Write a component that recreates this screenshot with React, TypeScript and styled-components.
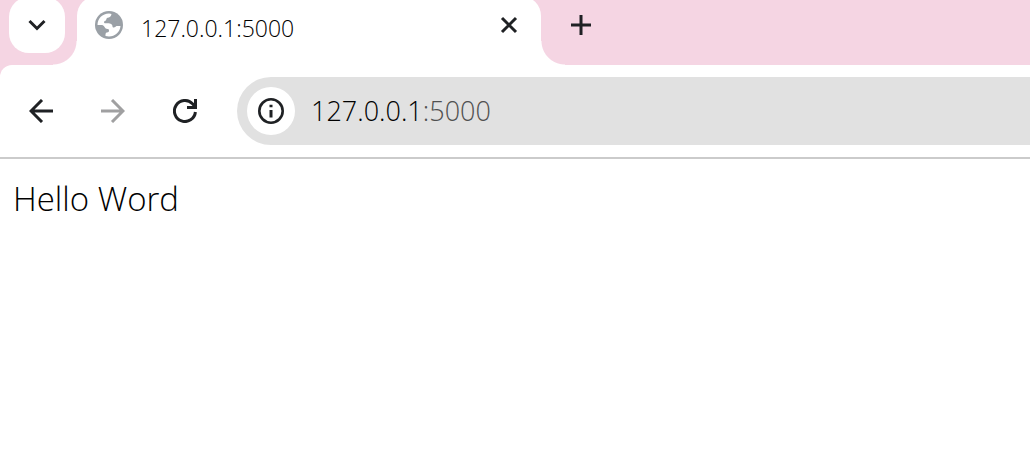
import React from "react";
import styled, { createGlobalStyle } from "styled-components";

const Global = createGlobalStyle`
  * { box-sizing: border-box; }
  body { margin: 0; background: #fff; overflow-x: hidden; }
  body, button, input { font-family: "Open Sans", "Noto Sans", sans-serif; }
`;

const Browser = styled.div`
  min-height: 100vh;
  background: #fff;
  overflow: hidden;
`;

const TabStrip = styled.header`
  display: flex;
  height: 65px;
  background: #f5d5e3;
`;

const IconButton = styled.button<{ $size: number }>`
  display: flex;
  flex: none;
  align-items: center;
  justify-content: center;
  width: ${(p) => p.$size}px;
  height: ${(p) => p.$size}px;
  padding: 0;
  border: 0;
  border-radius: 50%;
  background: transparent;
  color: #1f2124;
  svg { display: block; flex: none; }
  &:disabled { color: #a0a0a1; }
`;

const TabSearch = styled(IconButton)`
  margin: -3px 12px 0 9px;
  border-radius: 20px;
  background: #fff;
`;

const Tab = styled.div`
  position: relative;
  display: flex;
  align-items: center;
  flex: 0 1 464px;
  min-width: 0;
  height: 69px;
  margin-top: -4px;
  padding: 0 16px 11px;
  border-radius: 20px 20px 0 0;
  background: #fff;
  &::before, &::after {
    content: "";
    position: absolute;
    bottom: 0;
    width: 24px;
    height: 24px;
  }
  &::before {
    right: 100%;
    background: radial-gradient(circle at 0 0, transparent 23px, #fff 24px);
  }
  &::after {
    left: 100%;
    background: radial-gradient(circle at 100% 0, transparent 23px, #fff 24px);
  }
`;

const TabTitle = styled.span`
  flex: 1;
  margin-left: 16px;
  padding-top: 6px;
  font-size: 23px;
  font-weight: 300;
  line-height: 32px;
  color: #000;
`;

const NewTab = styled(IconButton)`
  margin: 5px 0 0 20px;
`;

const ToolbarWrap = styled.div`
  background: #f5d5e3;
`;

const Toolbar = styled.nav`
  display: flex;
  align-items: center;
  height: 94px;
  padding: 0 0 0 17px;
  border-bottom: 2px solid #cbcbcb;
  border-top-left-radius: 12px;
  background: #fff;
`;

const NavButtons = styled.div`
  display: flex;
  gap: 24px;
  margin-right: 28px;
`;

const AddressBar = styled.div`
  display: flex;
  align-items: center;
  flex: 1;
  height: 68px;
  padding-left: 10px;
  border-radius: 34px 0 0 34px;
  background: #e1e1e1;
`;

const SiteInfo = styled(IconButton)`
  background: #fff;
`;

const Url = styled.div`
  margin-left: 16px;
  font-size: 27px;
  font-weight: 300;
  line-height: 36px;
  color: #000;
`;

const Port = styled.span`
  color: #505050;
`;

const Page = styled.main`
  padding: 16px 13px;
  font-size: 33px;
  font-weight: 300;
  line-height: 48px;
  color: #000;
`;

const stroke = { fill: "none", stroke: "currentColor", strokeWidth: 3 };

export default function App() {
  return (
    <Browser>
      <Global />
      <TabStrip>
        <TabSearch $size={56} aria-label="Search tabs">
          <svg width="20" height="20" viewBox="0 0 20 20" {...stroke}>
            <path d="M2.500 6l7.500 7.500L17.500 6" />
          </svg>
        </TabSearch>
        <Tab>
          <svg width="32" height="32" viewBox="0 0 32 32">
            <circle cx="16" cy="16" r="14" fill="#9aa0a6" />
            <path
              fill="#fff"
              d="M4.500 16C4.500 9.500 9.500 4.600 16 4.500C17 4.500 18 4.700 18.500 5C18.300 7.500 16.500 8.500 14.500 8.700C13.300 9 13.500 10.500 13 11.200C12.300 12 11 12 11 13.200C11 14.200 12 14.300 13.500 14.300C16.500 14.300 19.500 14.800 19.500 17.500C19.500 18.300 20 18.500 20.800 18.500C22 18.500 22.500 17.500 23.500 17L27.500 17C27 23 22 27.500 16 27.500L12.500 27C12.500 26 12.300 23.500 14 23.500C15.500 23.500 16 22.800 16 21.500C16 20.500 15.500 20 14.500 20C11.500 20 11.500 16 9 16Z"
            />
          </svg>
          <TabTitle>127.0.0.1:5000</TabTitle>
          <IconButton $size={32} aria-label="Close tab">
            <svg width="20" height="20" viewBox="0 0 20 20" {...stroke}>
              <path d="M3 3l14 14M17 3L3 17" />
            </svg>
          </IconButton>
        </Tab>
        <NewTab $size={40} aria-label="New tab">
          <svg width="20" height="20" viewBox="0 0 20 20" {...stroke}>
            <path d="M0 10h20M10 0v20" />
          </svg>
        </NewTab>
      </TabStrip>
      <ToolbarWrap>
        <Toolbar>
          <NavButtons>
            <IconButton $size={48} aria-label="Back">
              <svg width="24" height="24" viewBox="0 0 24 24" {...stroke}>
                <path d="M24 12H2M13 1L2 12l11 11" />
              </svg>
            </IconButton>
            <IconButton $size={48} aria-label="Forward" disabled>
              <svg width="24" height="24" viewBox="0 0 24 24" {...stroke}>
                <path d="M0 12h22M11 1l11 11-11 11" />
              </svg>
            </IconButton>
            <IconButton $size={48} aria-label="Reload">
              <svg width="24" height="24" viewBox="0 0 24 24" {...stroke}>
                <path d="M22.400 13A10.500 10.500 0 1 1 19.500 4.700L22 7.500M22.500 0v8.500H14" />
              </svg>
            </IconButton>
          </NavButtons>
          <AddressBar>
            <SiteInfo $size={48} aria-label="View site information">
              <svg width="26" height="26" viewBox="0 0 26 26">
                <circle cx="13" cy="13" r="11.7" fill="none" stroke="currentColor" strokeWidth="2.6" />
                <path d="M11.500 6.700h3v2.600h-3zM11.500 12h3v7.500h-3z" fill="currentColor" />
              </svg>
            </SiteInfo>
            <Url>127.0.0.1<Port>:5000</Port></Url>
          </AddressBar>
        </Toolbar>
      </ToolbarWrap>
      <Page>Hello Word</Page>
    </Browser>
  );
}
